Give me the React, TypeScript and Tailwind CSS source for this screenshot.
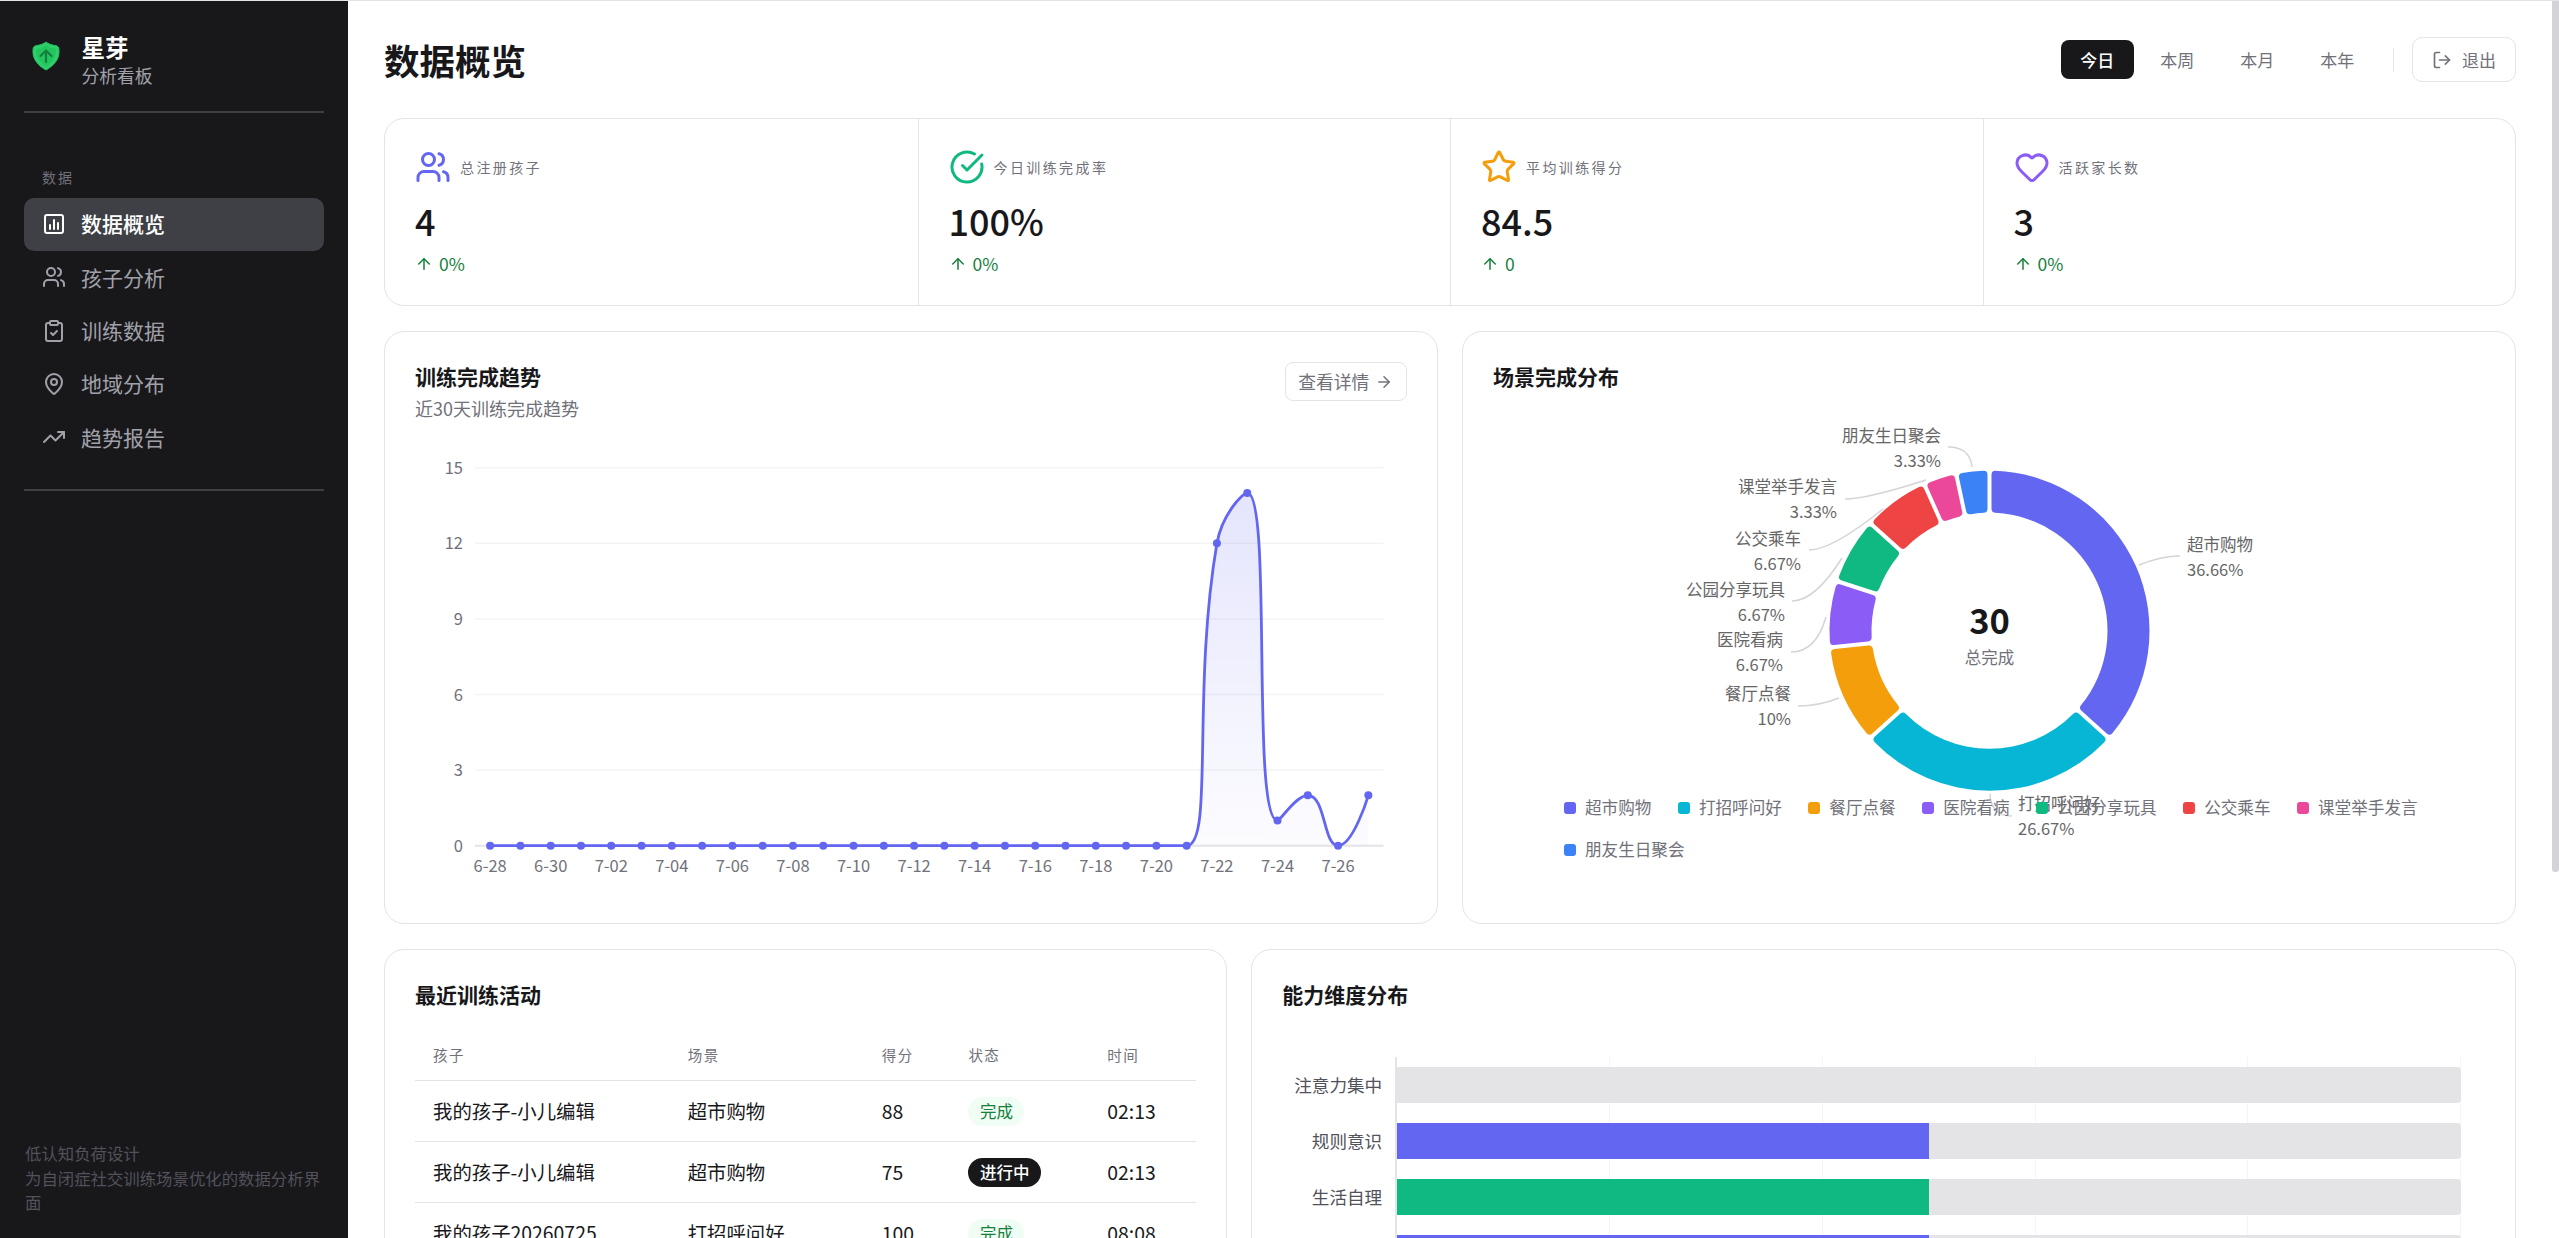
import { ArrowRight, ArrowUp, CircleCheckBig, ClipboardCheck, Heart, LogOut, MapPin, Star, TrendingUp, Users } from 'lucide-react'

const navItems = [
  { label: '数据概览', icon: OverviewIcon, active: true },
  { label: '孩子分析', icon: Users },
  { label: '训练数据', icon: ClipboardCheck },
  { label: '地域分布', icon: MapPin },
  { label: '趋势报告', icon: TrendingUp },
]

const stats = [
  { label: '总注册孩子', value: '4', change: '0%', icon: Users, color: 'text-[#6366f1]' },
  { label: '今日训练完成率', value: '100%', change: '0%', icon: CircleCheckBig, color: 'text-[#10b981]' },
  { label: '平均训练得分', value: '84.5', change: '0', icon: Star, color: 'text-[#f59e0b]' },
  { label: '活跃家长数', value: '3', change: '0%', icon: Heart, color: 'text-[#8b5cf6]' },
]

const trend = [...Array(24).fill(0), 12, 14, 1, 2, 0, 2] as number[]
const xLabels = ['6-28', '6-30', '7-02', '7-04', '7-06', '7-08', '7-10', '7-12', '7-14', '7-16', '7-18', '7-20', '7-22', '7-24', '7-26']

const scenes = [
  { name: '超市购物', value: 11, color: '#6366f1' },
  { name: '打招呼问好', value: 8, color: '#06b6d4' },
  { name: '餐厅点餐', value: 3, color: '#f59e0b' },
  { name: '医院看病', value: 2, color: '#8b5cf6' },
  { name: '公园分享玩具', value: 2, color: '#10b981' },
  { name: '公交乘车', value: 2, color: '#ef4444' },
  { name: '课堂举手发言', value: 1, color: '#ec4899' },
  { name: '朋友生日聚会', value: 1, color: '#3b82f6' },
]

// pie labels: [x, y of name, y of percent, anchor, percent, leader line]
const pieLabels = [
  { name: '超市购物', pct: '36.66%', x: 2187, y: 546, anchor: 'start', line: 'M2139 566Q2161 557 2180 557' },
  { name: '打招呼问好', pct: '26.67%', x: 2018, y: 805, anchor: 'start', line: 'M1990 795Q1991 817 2012 817' },
  { name: '餐厅点餐', pct: '10%', x: 1791, y: 695, anchor: 'end', line: 'M1839 699Q1819 707 1798 707' },
  { name: '医院看病', pct: '6.67%', x: 1783, y: 641, anchor: 'end', line: 'M1826 618Q1816 653 1791 653' },
  { name: '公园分享玩具', pct: '6.67%', x: 1785, y: 591, anchor: 'end', line: 'M1842 559Q1815 602 1792 602' },
  { name: '公交乘车', pct: '6.67%', x: 1801, y: 540, anchor: 'end', line: 'M1883 510Q1832 551 1809 551' },
  { name: '课堂举手发言', pct: '3.33%', x: 1837, y: 488, anchor: 'end', line: 'M1926 481Q1867 500 1845 500' },
  { name: '朋友生日聚会', pct: '3.33%', x: 1941, y: 437, anchor: 'end', line: 'M1972 468Q1970 448 1948 448' },
]

const activity = [
  { child: '我的孩子-小儿编辑', scene: '超市购物', score: 88, done: true, time: '02:13' },
  { child: '我的孩子-小儿编辑', scene: '超市购物', score: 75, done: false, time: '02:13' },
  { child: '我的孩子20260725', scene: '打招呼问好', score: 100, done: true, time: '08:08' },
]

const abilities = [
  { name: '注意力集中', pct: 0, color: 'bg-[#6366f1]' },
  { name: '规则意识', pct: 50, color: 'bg-[#6366f1]' },
  { name: '生活自理', pct: 50, color: 'bg-[#10b981]' },
  { name: '情绪管理', pct: 50, color: 'bg-[#6366f1]' },
]

function OverviewIcon({ size = 24, className = '' }: { size?: number; className?: string }) {
  return (
    <svg width={size} height={size} viewBox="0 0 24 24" fill="none" stroke="currentColor" strokeWidth="2" strokeLinecap="round" strokeLinejoin="round" className={className}>
      <rect x="3" y="3" width="18" height="18" rx="2" />
      <path d="M8 17v-4M12 17V8M16 17v-6" />
    </svg>
  )
}

function Logo() {
  return (
    <svg width="28" height="30" viewBox="0 0 28 30" className="shrink-0">
      <path d="M14 1C16 3 20 4 25 5C27 6 27 8 27 11C27 19 21 25 14 29C7 25 1 19 1 11C1 8 1 6 3 5C8 4 12 3 14 1Z" fill="#2fd06c" stroke="#22c55e" strokeWidth="1" />
      <path d="M14 4C16 6 20 7 24 8C25 14 20 22 14 26C8 22 3 14 4 8C8 7 12 6 14 4Z" fill="#22c55e" />
      <path d="M14 21V10M8.5 15L14 9.5L19.5 15" fill="none" stroke="#15803d" strokeWidth="2.2" strokeLinecap="round" strokeLinejoin="round" />
    </svg>
  )
}

function Sidebar() {
  return (
    <aside className="w-[348px] shrink-0 h-full bg-[#18181b] flex flex-col">
      <div className="h-[110px] mx-[24px] pl-[8px] pt-[6px] flex items-center gap-[21.5px] border-b-2 border-[#3f3f46] box-content -mt-[6px]">
        <Logo />
        <div className="mt-[8px]">
          <div className="text-[23.5px] leading-[30px] font-bold text-white">星芽</div>
          <div className="text-[17.8px] leading-[26px] text-[#a1a1aa]">分析看板</div>
        </div>
      </div>
      <div className="px-[24px]">
        <div className="pt-[50.5px] pb-[8px] pl-[18px] text-[14px] leading-[26px] tracking-[2px] text-[#71717a]">数据</div>
        <nav className="pb-[24.5px] border-b-2 border-[#3f3f46]">
          {navItems.map(item => (
            <div
              key={item.label}
              className={[
                'h-[53.33px] pl-[18px] rounded-[10px] flex items-center gap-[15px] text-[21px]',
                item.active ? 'bg-[#3f3f46] text-white font-medium' : 'text-[#a1a1aa]',
              ].join(' ')}
            >
              <item.icon size={24} className="shrink-0" />
              {item.label}
            </div>
          ))}
        </nav>
      </div>
      <div className="mt-auto px-[25px] pb-[23.5px] text-[16.4px] leading-[24.5px] text-[#52525b]">
        <div>低认知负荷设计</div>
        <div>为自闭症社交训练场景优化的数据分析界面</div>
      </div>
    </aside>
  )
}

function Header() {
  return (
    <header className="h-[45px] mb-[36px] flex items-center justify-between">
      <h1 className="text-[35.5px] font-bold text-[#18181b]">数据概览</h1>
      <div className="flex items-center">
        <div className="flex items-center gap-[6.5px] text-[17px] text-[#71717a]">
          <div className="w-[73.5px] h-[39px] rounded-[8px] bg-[#18181b] text-white font-medium flex items-center justify-center">今日</div>
          <div className="w-[73.5px] h-[39px] flex items-center justify-center">本周</div>
          <div className="w-[73.5px] h-[39px] flex items-center justify-center">本月</div>
          <div className="w-[73.5px] h-[39px] flex items-center justify-center">本年</div>
        </div>
        <div className="w-px h-[24px] bg-[#e4e4e7] ml-[19px] mr-[18px]" />
        <div className="w-[104px] h-[45px] rounded-[10px] border border-[#e4e4e7] flex items-center justify-center gap-[10px] text-[17px] text-[#71717a]">
          <LogOut size={20} />
          退出
        </div>
      </div>
    </header>
  )
}

function StatCards() {
  return (
    <section className="h-[188px] mb-[25px] grid grid-cols-4 rounded-[20px] border border-[#e4e4e7]">
      {stats.map((stat, i) => (
        <div key={stat.label} className={['p-[30px]', i > 0 ? 'border-l border-[#e4e4e7]' : ''].join(' ')}>
          <div className="h-[36px] flex items-center gap-[9px] text-[14px] tracking-[2.4px] text-[#71717a]">
            <stat.icon size={36} className={stat.color} />
            {stat.label}
          </div>
          <div className="mt-[10px] h-[50px] leading-[50px] text-[36px] font-medium text-[#18181b]">{stat.value}</div>
          <div className="mt-[7px] h-[24px] flex items-center gap-[6px] text-[17.5px] text-[#15803d]">
            <ArrowUp size={18} />
            {stat.change}
          </div>
        </div>
      ))}
    </section>
  )
}

// same control point logic as the chart library's smooth line
function smoothPath(pts: [number, number][], smooth = 0.5) {
  let d = `M${pts[0][0]} ${pts[0][1]}`
  let cp0x = pts[0][0]
  let cp0y = pts[0][1]
  const clamp = (v: number, a: number, b: number) => Math.max(Math.min(a, b), Math.min(v, Math.max(a, b)))
  for (let i = 1; i < pts.length; i++) {
    const [x, y] = pts[i]
    const [px, py] = pts[i - 1]
    let cp1x = x
    let cp1y = y
    let nextCp0x = x
    let nextCp0y = y
    if (i < pts.length - 1) {
      const [nx, ny] = pts[i + 1]
      const lenPrev = Math.hypot(x - px, y - py)
      const lenNext = Math.hypot(nx - x, ny - y)
      const ratio = lenNext / (lenNext + lenPrev)
      nextCp0x = clamp(x + (nx - px) * smooth * ratio, nx, x)
      nextCp0y = clamp(y + (ny - py) * smooth * ratio, ny, y)
      cp1x = clamp(x - (nextCp0x - x) * lenPrev / lenNext, px, x)
      cp1y = clamp(y - (nextCp0y - y) * lenPrev / lenNext, py, y)
      nextCp0x = x + (x - cp1x) * lenNext / lenPrev
      nextCp0y = y + (y - cp1y) * lenNext / lenPrev
    }
    d += `C${cp0x} ${cp0y} ${cp1x} ${cp1y} ${x} ${y}`
    cp0x = nextCp0x
    cp0y = nextCp0y
  }
  return d
}

function TrendChart() {
  const left = 475
  const right = 1383.5
  const bottom = 846.7
  const step = (right - left) / 30
  const unit = 25.2
  const pts = trend.map((v, i): [number, number] => [left + step * (i + 0.5), bottom - v * unit])
  const line = smoothPath(pts)
  return (
    <svg viewBox="415 440 992 454" className="w-[992px] h-[454px] block">
      <defs>
        <linearGradient id="trendFill" x1="0" y1="0" x2="0" y2="1">
          <stop offset="0" stopColor="#6366f1" stopOpacity="0.17" />
          <stop offset="1" stopColor="#6366f1" stopOpacity="0.02" />
        </linearGradient>
      </defs>
      {[0, 3, 6, 9, 12, 15].map(v => (
        <g key={v}>
          <line x1={left} x2={right} y1={bottom - v * unit} y2={bottom - v * unit} stroke={v === 0 ? '#e4e4e7' : '#f4f4f5'} strokeWidth={v === 0 ? 2 : 1.5} />
          <text x={463} y={bottom - v * unit + 6} textAnchor="end" fontSize="16.5" fill="#71717a">{v}</text>
        </g>
      ))}
      <path d={`${line}L${pts[29][0]} ${bottom}L${pts[0][0]} ${bottom}Z`} fill="url(#trendFill)" />
      <path d={line} fill="none" stroke="#6366f1" strokeWidth="2.8" />
      {pts.map(([x, y]) => <circle key={x} cx={x} cy={y} r="4" fill="#6366f1" />)}
      {xLabels.map((label, i) => (
        <text key={label} x={pts[i * 2][0]} y={872.5} textAnchor="middle" fontSize="16.5" fill="#71717a">{label}</text>
      ))}
    </svg>
  )
}

function sector(a0: number, a1: number) {
  const cx = 1989.5
  const cy = 631.7
  const r0 = 118
  const r1 = 160
  const p = 2
  const c = 4
  const pt = (r: number, a: number) => `${(cx + r * Math.sin(a)).toFixed(2)} ${(cy - r * Math.cos(a)).toFixed(2)}`
  const large = a1 - a0 > Math.PI ? 1 : 0
  return [
    `M${pt(r1, a0 + (p + c) / r1)}`,
    `A${r1} ${r1} 0 ${large} 1 ${pt(r1, a1 - (p + c) / r1)}`,
    `Q${pt(r1, a1 - p / r1)} ${pt(r1 - c, a1 - p / (r1 - c))}`,
    `L${pt(r0 + c, a1 - p / (r0 + c))}`,
    `Q${pt(r0, a1 - p / r0)} ${pt(r0, a1 - (p + c) / r0)}`,
    `A${r0} ${r0} 0 ${large} 0 ${pt(r0, a0 + (p + c) / r0)}`,
    `Q${pt(r0, a0 + p / r0)} ${pt(r0 + c, a0 + p / (r0 + c))}`,
    `L${pt(r1 - c, a0 + p / (r1 - c))}`,
    `Q${pt(r1, a0 + p / r1)} ${pt(r1, a0 + (p + c) / r1)}`,
    'Z',
  ].join('')
}

function SceneChart() {
  const total = scenes.reduce((sum, s) => sum + s.value, 0)
  let acc = 0
  return (
    <div className="relative w-[992px] h-[484px]">
      <svg viewBox="1493 410 992 484" className="w-[992px] h-[484px] block">
        {pieLabels.map(l => (
          <g key={l.name}>
            <path d={l.line} fill="none" stroke="#d4d4d8" strokeWidth="1.5" />
            <text x={l.x} y={l.y + 6} textAnchor={l.anchor as 'start' | 'end'} fontSize="16.5" fill="#666666">{l.name}</text>
            <text x={l.x} y={l.y + 31} textAnchor={l.anchor as 'start' | 'end'} fontSize="16.5" fill="#666666">{l.pct}</text>
          </g>
        ))}
        {scenes.map(s => {
          const a0 = (acc / total) * Math.PI * 2
          acc += s.value
          const a1 = (acc / total) * Math.PI * 2
          return <path key={s.name} d={sector(a0, a1)} fill={s.color} />
        })}
        <text x={1989.5} y={634.5} textAnchor="middle" fontSize="34.5" fontWeight="700" fill="#18181b">30</text>
        <text x={1989.5} y={665} textAnchor="middle" fontSize="16.5" fill="#71717a">总完成</text>
      </svg>
      <div className="absolute left-[71px] top-[386.5px] w-[880px] flex flex-wrap gap-x-[26.5px] gap-y-[18px] text-[16.6px] text-[#71717a]">
        {scenes.map(s => (
          <div key={s.name} className="h-[24px] flex items-center gap-[9px]">
            <SceneSwatch color={s.color} />
            {s.name}
          </div>
        ))}
      </div>
    </div>
  )
}

function SceneSwatch({ color }: { color: string }) {
  return <span className="w-[12px] h-[12px] rounded-[3px]" style={{ backgroundColor: color }} />
}

function ActivityTable() {
  return (
    <div className="rounded-[20px] border border-[#e4e4e7] p-[30px] h-[600px]">
      <h2 className="-mt-[1px] h-[30px] leading-[30px] text-[21px] font-bold text-[#18181b]">最近训练活动</h2>
      <table className="mt-[21px] w-full table-fixed">
        <thead>
          <tr className="h-[50px] border-b border-[#e4e4e7] text-left text-[14.5px] tracking-[1.5px] text-[#71717a]">
            <th className="w-[272.7px] pl-[18px] font-normal">孩子</th>
            <th className="w-[194px] font-normal">场景</th>
            <th className="w-[86.7px] font-normal">得分</th>
            <th className="w-[138.9px] font-normal">状态</th>
            <th className="font-normal">时间</th>
          </tr>
        </thead>
        <tbody className="text-[19.4px] text-[#18181b]">
          {activity.map((row, i) => (
            <tr key={i} className="h-[61px] border-b border-[#e4e4e7]">
              <td className="pl-[18px] whitespace-nowrap">{row.child}</td>
              <td>{row.scene}</td>
              <td>{row.score}</td>
              <td>
                {row.done ? (
                  <span className="inline-flex items-center h-[29px] px-[11.5px] rounded-full bg-[#f0fdf4] text-[16.5px] text-[#15803d]">完成</span>
                ) : (
                  <span className="inline-flex items-center h-[29px] px-[11.5px] rounded-full bg-[#18181b] text-[16.5px] font-medium text-white">进行中</span>
                )}
              </td>
              <td>{row.time}</td>
            </tr>
          ))}
        </tbody>
      </table>
    </div>
  )
}

function AbilityChart() {
  return (
    <div className="rounded-[20px] border border-[#e4e4e7] p-[30px] h-[600px]">
      <h2 className="-mt-[1px] h-[30px] leading-[30px] text-[21px] font-bold text-[#18181b]">能力维度分布</h2>
      <div className="mt-[47.5px] flex">
        <div className="w-[113px] shrink-0 pt-[10px] pr-[13px] flex flex-col gap-[19.7px] text-[17.6px] text-[#52525b] text-right">
          {abilities.map(a => (
            <div key={a.name} className="h-[36.5px] leading-[36.5px]">{a.name}</div>
          ))}
        </div>
        <div className="relative w-[1066px] pt-[10px] flex flex-col gap-[19.7px] border-l-2 border-[#e4e4e7]">
          <div className="absolute inset-0 grid grid-cols-5">
            {[0, 1, 2, 3, 4].map(i => <div key={i} className="border-r border-[#f4f4f5]" />)}
          </div>
          {abilities.map(a => (
            <div key={a.name} className="relative h-[36.5px] w-full rounded-r-[4px] bg-[#e4e4e7] overflow-hidden">
              <div className={`h-full ${a.color}`} style={{ width: `${a.pct}%` }} />
            </div>
          ))}
        </div>
      </div>
    </div>
  )
}

export default function App() {
  return (
    <div className="h-screen overflow-hidden flex border-t border-[#e4e4e7] bg-white font-['Noto_Sans_CJK_SC','Noto_Sans',sans-serif]">
      <Sidebar />
      <main className="flex-1 min-w-0 overflow-hidden px-[36px] pt-[36px]">
        <Header />
        <StatCards />
        <div className="grid grid-cols-2 gap-x-[24px] mb-[25px]">
          <div className="h-[593px] rounded-[20px] border border-[#e4e4e7] p-[30px]">
            <div className="h-[77px] flex items-start justify-between">
              <div>
                <h2 className="-mt-[1px] h-[30px] leading-[30px] text-[21px] font-bold text-[#18181b]">训练完成趋势</h2>
                <p className="mt-[2px] leading-[30px] text-[18px] text-[#71717a]">近30天训练完成趋势</p>
              </div>
              <div className="w-[122.5px] h-[39px] rounded-[8px] border border-[#e4e4e7] flex items-center justify-center gap-[6px] text-[17.8px] text-[#71717a]">
                查看详情
                <ArrowRight size={18} />
              </div>
            </div>
            <TrendChart />
          </div>
          <div className="h-[593px] rounded-[20px] border border-[#e4e4e7] p-[30px]">
            <h2 className="-mt-[1px] mb-[1px] h-[47px] leading-[30px] text-[21px] font-bold text-[#18181b]">场景完成分布</h2>
            <SceneChart />
          </div>
        </div>
        <div className="grid grid-cols-[2fr_3fr] gap-x-[24px]">
          <ActivityTable />
          <AbilityChart />
        </div>
      </main>
      <div className="w-[7px] shrink-0">
        <div className="h-[871px] rounded-b-[3px] bg-[#d4d4d8]" />
      </div>
    </div>
  )
}
